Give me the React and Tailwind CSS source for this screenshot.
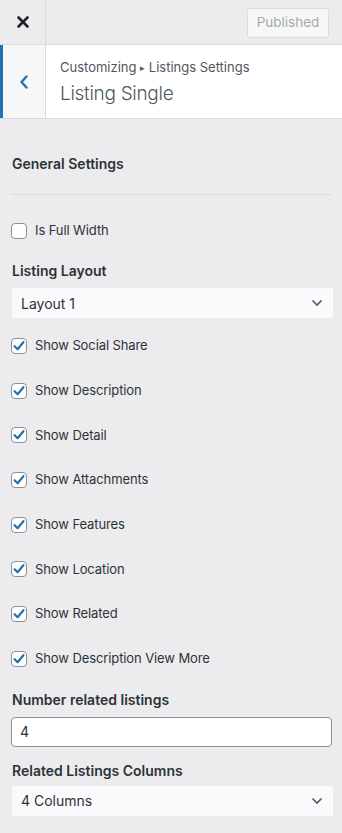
import React from "react";

const font = { fontFamily: "Inter, 'Noto Sans', sans-serif" };

function Check({ checked, label }) {
  return (
    <div className="flex items-center h-[20px]">
      <div className="w-[16px] h-[16px] ml-[11px] rounded-[4px] border border-[#8c8f94] bg-white flex items-center justify-center shrink-0">
        {checked && (
          <svg width="14" height="14" viewBox="0 0 14 14">
            <path d="M2.6 7.2 L5.6 10.2 L11.4 3.2" fill="none" stroke="#2271b1" strokeWidth="2.2" strokeLinecap="round" strokeLinejoin="round" />
          </svg>
        )}
      </div>
      <span className="ml-[8px] text-[13px] tracking-[-0.1px] text-[#2c3338]">{label}</span>
    </div>
  );
}

function Select({ value }) {
  return (
    <div className="mx-[12px] mr-[9px] h-[30px] bg-[#fafafc] flex items-center justify-between pl-[9px] pr-[10px]">
      <span className="text-[14px] text-[#2c3338]">{value}</span>
      <svg width="12" height="8" viewBox="0 0 12 8">
        <path d="M1.5 1.5 L6 6 L10.5 1.5" fill="none" stroke="#50575e" strokeWidth="1.6" />
      </svg>
    </div>
  );
}

export default function App() {
  const checks = [
    "Show Social Share",
    "Show Description",
    "Show Detail",
    "Show Attachments",
    "Show Features",
    "Show Location",
    "Show Related",
    "Show Description View More",
  ];
  return (
    <div className="w-[342px] h-[833px] bg-[#ececee] overflow-hidden" style={font}>
      {/* top bar */}
      <div className="h-[45px] flex border-b border-[#dcdcde]">
        <div className="w-[46px] border-r border-[#dcdcde] flex items-center justify-center">
          <svg width="14" height="14" viewBox="0 0 14 14">
            <path d="M2.5 2.5 L11.5 11.5 M11.5 2.5 L2.5 11.5" stroke="#1d2327" strokeWidth="2.6" strokeLinecap="round" />
          </svg>
        </div>
        <div className="flex-1 flex items-center justify-end pr-[13px]">
          <div className="h-[30px] w-[82px] rounded-[3px] border border-[#dcdcde] bg-[#f6f7f7] text-[#a7aaad] text-[13.5px] flex items-center justify-center mt-[1px]">
            Published
          </div>
        </div>
      </div>
      {/* section header */}
      <div className="h-[74px] flex bg-white border-b border-[#dcdcde]">
        <div className="w-[46px] bg-[#f6f7f7] border-l-[3px] border-l-[#2271b1] border-r border-r-[#dcdcde] flex items-center justify-center">
          <svg width="10" height="14" viewBox="0 0 10 14">
            <path d="M7.5 1.5 L2.5 7 L7.5 12.5" fill="none" stroke="#2271b1" strokeWidth="2.4" strokeLinecap="round" strokeLinejoin="round" />
          </svg>
        </div>
        <div className="flex-1 pl-[14px] pt-[13px]">
          <div className="text-[13px] leading-[18px] text-[#50575e]">
            Customizing <span className="text-[9px] relative top-[-1px]">▸</span> Listings Settings
          </div>
          <div className="text-[19px] leading-[28px] font-light tracking-[-0.3px] text-[#50575e] mt-[2px]">Listing Single</div>
        </div>
      </div>
      {/* content */}
      <div className="flex flex-col">
        <div className="mt-[35px] ml-[12px] text-[14px] leading-[20px] font-semibold text-[#2c3338]">General Settings</div>
        <div className="mt-[20px] mx-[11px] mr-[10px] h-px bg-[#dcdcde]" />
        <div className="mt-[26px]">
          <Check checked={false} label="Is Full Width" />
        </div>
        <div className="mt-[20px] ml-[12px] text-[14px] leading-[20px] font-semibold text-[#2c3338]">Listing Layout</div>
        <div className="mt-[7px]">
          <Select value="Layout 1" />
        </div>
        <div className="mt-[18px] flex flex-col gap-[24.7px]">
          {checks.map((c) => (
            <Check key={c} checked label={c} />
          ))}
        </div>
        <div className="mt-[21px] ml-[12px] text-[14px] leading-[20px] font-semibold text-[#2c3338]">Number related listings</div>
        <div className="mt-[7px] mx-[11px] mr-[10px] h-[30px] rounded-[4px] border border-[#8c8f94] bg-white flex items-center pl-[8px] text-[14px] text-[#2c3338]">
          4
        </div>
        <div className="mt-[14px] ml-[12px] text-[14px] leading-[20px] font-semibold text-[#2c3338]">Related Listings Columns</div>
        <div className="mt-[5px]">
          <Select value="4 Columns" />
        </div>
      </div>
    </div>
  );
}
